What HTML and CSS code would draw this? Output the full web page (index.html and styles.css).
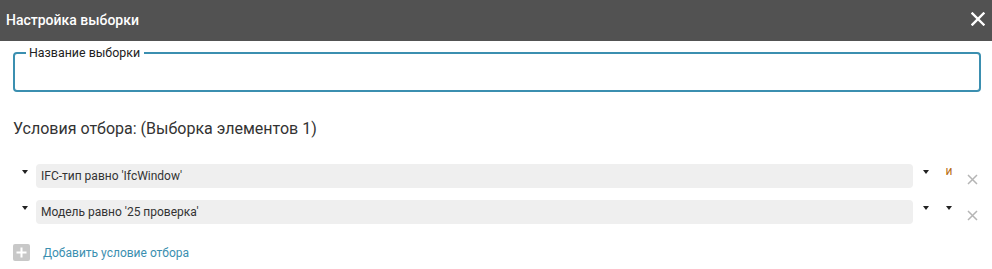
FILE: index.html
```html
<!DOCTYPE html>
<html lang="ru">
<head>
  <meta charset="UTF-8">
  <title>Настройка выборки</title>
  <link rel="stylesheet" href="styles.css">
</head>
<body>
  <div class="dialog">
    <header class="dialog-head">
      <span class="dialog-title">Настройка выборки</span>
      <button class="close-btn" title="Закрыть">
        <svg width="14" height="14" viewBox="0 0 14 14"><path d="M1.5 1.5 L12.5 12.5 M12.5 1.5 L1.5 12.5" stroke="#fff" stroke-width="2.4" stroke-linecap="square"/></svg>
      </button>
    </header>

    <div class="dialog-body">
      <fieldset class="name-field">
        <legend>Название выборки</legend>
        <input type="text" class="name-input">
      </fieldset>

      <h2 class="cond-title">Условия отбора: (Выборка элементов 1)</h2>

      <div class="cond-list">
        <div class="cond-row">
          <span class="caret"></span>
          <div class="cond-box">IFC-тип равно 'IfcWindow'</div>
          <span class="caret"></span>
          <span class="op">и</span>
          <span class="remove">
            <svg width="11" height="11" viewBox="0 0 11 11"><path d="M1 1 L10 10 M10 1 L1 10" stroke="#b5b5b5" stroke-width="1.5"/></svg>
          </span>
        </div>
        <div class="cond-row">
          <span class="caret"></span>
          <div class="cond-box">Модель равно '25 проверка'</div>
          <span class="caret"></span>
          <span class="op"><span class="caret"></span></span>
          <span class="remove">
            <svg width="11" height="11" viewBox="0 0 11 11"><path d="M1 1 L10 10 M10 1 L1 10" stroke="#b5b5b5" stroke-width="1.5"/></svg>
          </span>
        </div>
      </div>

      <div class="add-row">
        <span class="add-icon">
          <svg width="17" height="17" viewBox="0 0 17 17"><path d="M8.5 3.5 V13.5 M3.5 8.5 H13.5" stroke="#fff" stroke-width="2"/></svg>
        </span>
        <a href="#" class="add-link">Добавить условие отбора</a>
      </div>
    </div>
  </div>
</body>
</html>
```

FILE: styles.css
```css
* {
  margin: 0;
  padding: 0;
  box-sizing: border-box;
}

body {
  font-family: Roboto, "Liberation Sans", Arial, sans-serif;
  background: #fff;
  color: #333;
  width: 992px;
  height: 269px;
  overflow: hidden;
}

.dialog-head {
  height: 41px;
  background: #525252;
  display: flex;
  align-items: center;
  justify-content: space-between;
  padding: 0 7px 0 6px;
}

.dialog-title {
  color: #fff;
  font-size: 14px;
  font-weight: 500;
  margin-top: -1px;
}

.close-btn {
  background: none;
  border: none;
  width: 14px;
  height: 14px;
  display: flex;
  margin-top: -3px;
}

.dialog-body {
  padding: 0 11px 0 13px;
}

.name-field {
  border: 2px solid #3b8fb0;
  border-radius: 4px;
  margin-top: 5px;
  height: 46px;
  padding: 0 12px;
}

.name-field legend {
  font-size: 12.4px;
  color: #222;
  padding: 0 4px 0 3px;
  margin-left: -1px;
  line-height: 14px;
}

.name-input {
  border: none;
  outline: none;
  width: 100%;
  height: 24px;
  font-size: 12px;
  font-family: inherit;
}

.cond-title {
  font-size: 16px;
  font-weight: 400;
  color: #333;
  margin-top: 27px;
  line-height: 20px;
}

.cond-list {
  margin-top: 25px;
  display: flex;
  flex-direction: column;
  gap: 12px;
}

.cond-row {
  display: flex;
  align-items: flex-start;
  height: 24px;
}

.caret {
  width: 0;
  height: 0;
  border-left: 3.5px solid transparent;
  border-right: 3.5px solid transparent;
  border-top: 4px solid #222;
  margin-top: 6px;
  flex-shrink: 0;
}

.cond-row > .caret:first-child {
  margin-left: 9px;
  margin-right: 8px;
}

.cond-box {
  flex: 1;
  height: 24px;
  background: #efefef;
  border-radius: 4px;
  font-size: 12px;
  color: #333;
  line-height: 24px;
  padding-left: 5px;
}

.cond-box + .caret {
  margin-left: 10px;
}

.op {
  width: 8px;
  margin-left: 16px;
  display: flex;
  justify-content: center;
  font-size: 12px;
  color: #b86d12;
  line-height: 14px;
}

.op .caret {
  margin-top: 6px;
}

.remove {
  width: 11px;
  display: flex;
  margin-top: 10px;
  margin-left: 14px;
  margin-right: 3px;
}

.add-row {
  display: flex;
  align-items: center;
  margin-top: 20px;
  gap: 13px;
}

.add-icon {
  width: 17px;
  height: 17px;
  background: #c8c8c8;
  border-radius: 2px;
  display: flex;
}

.add-link {
  font-size: 12px;
  color: #3b8fb0;
  text-decoration: none;
}
```
